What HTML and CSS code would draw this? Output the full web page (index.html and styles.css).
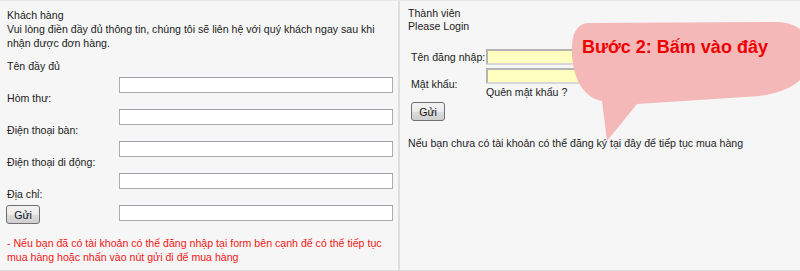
FILE: index.html
```html
<!DOCTYPE html>
<html lang="vi">
<head>
  <meta charset="UTF-8" />
  <meta name="viewport" content="width=device-width, initial-scale=1" />
  <title>Đặt hàng</title>
  <link rel="stylesheet" href="styles.css">
</head>
<body>

  <div class="page">

    <div class="panel customer">
      <div class="intro">
        <div>Khách hàng</div>
        <div>Vui lòng điền đầy đủ thông tin, chúng tôi sẽ liên hệ với quý khách ngay sau khi nhận được đơn hàng.</div>
      </div>

      <div class="fields">
        <div class="field">
          <div class="label">Tên đầy đủ</div>
          <div class="control"><input class="text" type="text" /></div>
        </div>
        <div class="field">
          <div class="label">Hòm thư:</div>
          <div class="control"><input class="text" type="text" /></div>
        </div>
        <div class="field">
          <div class="label">Điện thoại bàn:</div>
          <div class="control"><input class="text" type="text" /></div>
        </div>
        <div class="field">
          <div class="label">Điện thoại di động:</div>
          <div class="control"><input class="text" type="text" /></div>
        </div>
        <div class="field">
          <div class="label">Địa chỉ:</div>
          <div class="control with-button">
            <button class="btn" type="button">Gửi</button>
            <input class="text" type="text" />
          </div>
        </div>
      </div>

      <div class="note">- Nếu bạn đã có tài khoản có thể đăng nhập tại form bên cạnh để có thể tiếp tục mua hàng hoặc nhấn vào nút gửi đi để mua hàng</div>
    </div>

    <div class="panel member">
      <div>Thành viên</div>
      <div>Please Login</div>

      <div class="login">
        <div class="login-label">Tên đăng nhập:</div>
        <div><input class="yellow" type="text" /></div>
        <div class="login-label">Mật khẩu:</div>
        <div>
          <input class="yellow" type="password" />
          <div class="forgot">Quên mật khẩu ?</div>
        </div>
      </div>

      <button class="btn login-btn" type="button">Gửi</button>

      <div class="register">Nếu bạn chưa có tài khoản có thể đăng ký tại đây để tiếp tục mua hàng</div>
    </div>

    <!-- bong bóng chú thích -->
    <div class="callout">
      <svg width="260" height="150" viewBox="0 0 260 150">
        <path d="M27 22 L217 21 C245 22 252 40 250 58 C248 78 232 90 200 95 L77 103 L47 140 L42 100 C25 97 14 80 12 55 C11 35 15 24 27 22 Z" fill="#f4b8b8" />
      </svg>
      <span class="callout-text">Bước 2: Bấm vào đây</span>
    </div>

  </div>

</body>
</html>
```

FILE: styles.css
```css
body {
  margin: 0;
  padding: 0;
  font-family: 'Liberation Sans', Arial, sans-serif;
  font-size: 10.6px;
  color: #222;
  background: #f6f6f6;
}

.page {
  position: relative;
  display: flex;
  height: 271px;
  box-sizing: border-box;
  border-top: 1px solid #e8e8e8;
  border-bottom: 1px solid #dcdcdc;
  background: #f6f6f6;
  overflow: hidden;
}

.panel {
  line-height: 14px;
}

.customer {
  width: 400px;
  box-sizing: border-box;
  padding: 7px 7px 0 7px;
  border-right: 2px solid #dedede;
}

.member {
  flex: 1;
  padding: 6px 8px 0 8px;
  line-height: 13px;
}

.intro {
  width: 386px;
}

.fields {
  margin-top: 9px;
}

.field {
  height: 32px;
}

.label {
  line-height: 14px;
}

.control {
  display: flex;
  justify-content: flex-end;
  align-items: flex-start;
  width: 386px;
  margin-top: 4px;
}

.with-button {
  justify-content: space-between;
}

.text {
  width: 274px;
  height: 16px;
  box-sizing: border-box;
  margin: 0;
  padding: 0 2px;
  border: 1px solid #abadb3;
  border-top-color: #a0a4aa;
  background: #fff;
}

.btn {
  width: 34px;
  height: 19px;
  margin: 0;
  padding: 0;
  font-family: 'Liberation Sans', Arial, sans-serif;
  font-size: 10.6px;
  color: #111;
  border: 1px solid #707070;
  border-radius: 3px;
  background: linear-gradient(#f2f2f2 0%, #ebebeb 50%, #dddddd 51%, #cfcfcf 100%);
}

.with-button .btn {
  margin-left: -1px;
}

.note {
  margin-top: 17px;
  width: 386px;
  color: #f01818;
}

.login {
  display: grid;
  grid-template-columns: 75px 170px;
  row-gap: 3px;
  align-items: center;
  margin: 16px 0 0 3px;
  line-height: 14px;
}

.login-label {
  white-space: nowrap;
}

.yellow {
  display: block;
  width: 170px;
  height: 16px;
  box-sizing: border-box;
  margin: 0;
  padding: 0 2px;
  border: 2px solid #b4b4b4;
  border-right-color: #d8d8d8;
  border-bottom-color: #d8d8d8;
  background: #ffffc0;
}

.forgot {
  margin-top: 1px;
}

.login-btn {
  display: block;
  margin: 3px 0 0 3px;
}

.register {
  margin-top: 15px;
  line-height: 14px;
}

.callout {
  position: absolute;
  left: 560px;
  top: 0;
  width: 260px;
  height: 150px;
}

.callout svg {
  display: block;
}

.callout-text {
  position: absolute;
  left: 22px;
  top: 37px;
  font-size: 18px;
  line-height: 18px;
  font-weight: bold;
  color: #ee0000;
  white-space: nowrap;
}
```
